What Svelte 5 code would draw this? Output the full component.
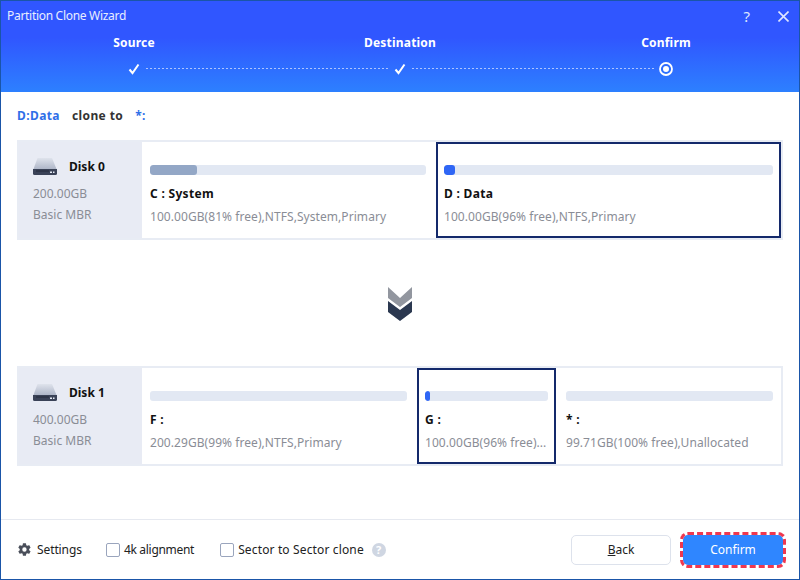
<script>
	const steps = [
		{ name: 'Source', state: 'done' },
		{ name: 'Destination', state: 'done' },
		{ name: 'Confirm', state: 'current' }
	];

	const disks = [
		{
			name: 'Disk 0',
			size: '200.00GB',
			type: 'Basic MBR',
			parts: [
				{ label: 'C : System', info: '100.00GB(81% free),NTFS,System,Primary', width: 292, used: 17, fill: 'grey' },
				{ label: 'D : Data', info: '100.00GB(96% free),NTFS,Primary', width: 345, used: 3.300, fill: 'blue', selected: true }
			]
		},
		{
			name: 'Disk 1',
			size: '400.00GB',
			type: 'Basic MBR',
			parts: [
				{ label: 'F :', info: '200.29GB(99% free),NTFS,Primary', width: 273, used: 0 },
				{ label: 'G :', info: '100.00GB(96% free)...', width: 139, used: 4, fill: 'blue', selected: true },
				{ label: '* :', info: '99.71GB(100% free),Unallocated', width: 223, used: 0 }
			]
		}
	];
</script>

{#snippet diskRow(disk)}
	<div class="disk">
		<div class="disk-info">
			<div class="disk-title">
				<svg width="24" height="17" viewBox="0 0 24 17">
					<defs>
						<linearGradient id="hdd" x1="0" y1="0" x2="0" y2="1">
							<stop offset="0" stop-color="#dfe3ec" />
							<stop offset="1" stop-color="#aeb6c8" />
						</linearGradient>
					</defs>
					<path d="M4.500 0h14.500L23.500 11H.5z" fill="url(#hdd)" />
					<path d="M0 11h24v4.500a1.500 1.500 0 0 1-1.500 1.500H1.500A1.500 1.500 0 0 1 0 15.500z" fill="#3a4257" />
					<rect x="3" y="12.500" width="13" height="1" fill="#23293a" />
					<rect x="17" y="13.500" width="2" height="1.500" fill="#e8edf7" />
					<rect x="20" y="13.500" width="1.500" height="1.500" fill="#e8edf7" />
				</svg>
				<b>{disk.name}</b>
			</div>
			<div class="disk-meta">{disk.size}</div>
			<div class="disk-meta">{disk.type}</div>
		</div>
		{#each disk.parts as part}
			<div class="part" class:selected={part.selected} style="width: {part.width}px">
				<div class="bar">
					{#if part.used}
						<div class="bar-fill {part.fill}" style="width: {part.used}%"></div>
					{/if}
				</div>
				<div class="part-label">{part.label}</div>
				<div class="part-info">{part.info}</div>
			</div>
		{/each}
	</div>
{/snippet}

<div class="window">
	<header class="head">
		<div class="title-row">
			<span class="title">Partition Clone Wizard</span>
			<div class="win-btns">
				<span class="help">?</span>
				<svg width="11" height="11" viewBox="0 0 11 11">
					<path d="M.5 .5l10 10M10.500 .5l-10 10" stroke="#dfe6ff" stroke-width="1.600" fill="none" />
				</svg>
			</div>
		</div>
		<div class="steps">
			{#each steps as step, i}
				<div class="step">
					<div class="step-name">{step.name}</div>
					<div class="step-mark">
						{#if step.state === 'done'}
							<svg width="12" height="12" viewBox="0 0 12 12">
								<path d="M1.500 6.500L4.500 10L10.500 1.500" stroke="#fff" stroke-width="2" fill="none" />
							</svg>
						{:else}
							<svg width="16" height="16" viewBox="0 0 16 16">
								<circle cx="8" cy="8" r="6" stroke="#fff" stroke-width="1.800" fill="none" />
								<circle cx="8" cy="8" r="3" fill="#fff" />
							</svg>
						{/if}
					</div>
				</div>
				{#if i < steps.length - 1}
					<div class="dots"></div>
				{/if}
			{/each}
		</div>
	</header>

	<div class="content">
		<div class="summary">
			<span class="blue-text">D:Data</span>
			<span>clone to</span>
			<span class="blue-text">*:</span>
		</div>

		{@render diskRow(disks[0])}

		<div class="arrow">
			<svg width="24" height="34" viewBox="0 0 24 34">
				<path d="M0 0L12 11L24 0V11L12 20L0 11z" fill="#92969f" />
				<path d="M0 14L12 23L24 14V25L12 34L0 25z" fill="#2b3850" />
			</svg>
		</div>

		{@render diskRow(disks[1])}
	</div>

	<footer class="foot">
		<div class="opt settings">
			<svg width="15" height="15" viewBox="0 0 24 24">
				<path fill="#4a4f5a" d="M19.400 13c.04-.33.06-.66.06-1s-.02-.67-.06-1l2.100-1.650a.5.5 0 0 0 .12-.64l-2-3.460a.5.5 0 0 0-.61-.22l-2.490 1a7.300 7.300 0 0 0-1.730-1l-.38-2.650A.5.5 0 0 0 13.900 2h-4a.5.500 0 0 0-.49.42l-.38 2.650c-.62.25-1.200.59-1.730 1l-2.490-1a.5.5 0 0 0-.61.22l-2 3.460a.5.5 0 0 0 .12.64L4.420 11c-.04.33-.06.67-.06 1s.02.67.06 1l-2.100 1.650a.5.5 0 0 0-.12.64l2 3.460c.12.22.39.3.61.22l2.490-1c.53.41 1.110.75 1.730 1l.38 2.650c.04.24.25.42.49.42h4c.24 0 .45-.18.49-.42l.38-2.650c.62-.25 1.200-.59 1.730-1l2.490 1c.22.08.49 0 .61-.22l2-3.460a.5.5 0 0 0-.12-.64zM11.900 15.500a3.500 3.500 0 1 1 0-7 3.500 3.500 0 0 1 0 7z" />
			</svg>
			<span>Settings</span>
		</div>
		<div class="opt align"><span class="check"></span><span>4k alignment</span></div>
		<div class="opt sector"><span class="check"></span><span>Sector to Sector clone</span><span class="tip">?</span></div>
		<div class="buttons">
			<button class="btn back"><u>B</u>ack</button>
			<button class="btn confirm">Confirm</button>
		</div>
	</footer>
</div>

<style>
	:global(body) {
		margin: 0;
	}

	.window {
		width: 800px;
		height: 580px;
		box-sizing: border-box;
		border: 1px solid #1a55a8;
		display: flex;
		flex-direction: column;
		background: #fff;
		font-family: "Noto Sans", sans-serif;
		font-size: 12px;
		color: #222;
		overflow: hidden;
	}

	.head {
		height: 91px;
		flex: none;
		background: linear-gradient(180deg, #3056ff 0%, #3056ff 40%, #2d80ff 100%);
		color: #fff;
	}

	.title-row {
		height: 30px;
		display: flex;
		align-items: center;
		justify-content: space-between;
		padding: 0 10px 0 6px;
	}

	.title {
		color: #e8edff;
		letter-spacing: -0.3px;
		margin-top: -1px;
	}

	.win-btns {
		display: flex;
		align-items: center;
		gap: 28px;
	}

	.help {
		font-size: 15px;
		color: #dfe6ff;
	}

	.steps {
		display: flex;
		padding: 4px 0 0 133px;
	}

	.step {
		width: 0;
		display: flex;
		flex-direction: column;
		align-items: center;
	}

	.step-name {
		font-weight: bold;
		white-space: nowrap;
		height: 24px;
		line-height: 16px;
		letter-spacing: 0.2px;
	}

	.step-mark {
		height: 20px;
		display: flex;
		align-items: center;
	}

	.dots {
		width: 242px;
		height: 1px;
		margin: 33px 12px 0;
		background: repeating-linear-gradient(90deg, #aec3ff 0 2px, transparent 2px 4px);
	}

	.content {
		flex: 1;
		padding: 0 16px;
	}

	.summary {
		height: 48px;
		box-sizing: border-box;
		padding-bottom: 2px;
		display: flex;
		align-items: center;
		gap: 12px;
		font-weight: bold;
		color: #333;
		letter-spacing: 0.4px;
	}

	.blue-text {
		color: #2f6fe8;
	}

	.disk {
		display: flex;
		height: 100px;
		box-sizing: border-box;
		border: 2px solid #e8ecf4;
	}

	.disk-info {
		width: 123px;
		flex: none;
		box-sizing: border-box;
		background: #e8ebf4;
		padding: 16px 0 0 14px;
		color: #8a8d96;
	}

	.disk-title {
		display: flex;
		align-items: center;
		gap: 12px;
		color: #111;
		margin-bottom: 8px;
	}

	.disk-meta {
		height: 21px;
		line-height: 21px;
	}

	.part {
		box-sizing: border-box;
		flex: none;
		padding: 21px 6px 0;
		border: 2px solid transparent;
		background: #fff;
	}

	.part.selected {
		border-color: #14296b;
		margin-left: 2px;
	}

	.part.selected + .part {
		margin-left: 2px;
	}

	.bar {
		height: 10px;
		background: #e2e8f3;
		border-radius: 3px;
		overflow: hidden;
	}

	.bar-fill {
		height: 100%;
		border-radius: 3px;
	}

	.bar-fill.grey {
		background: #93a7c6;
	}

	.bar-fill.blue {
		background: #2f66f5;
	}

	.part-label {
		margin-top: 11px;
		font-weight: bold;
		color: #111;
		height: 16px;
		line-height: 16px;
		letter-spacing: 0.3px;
	}

	.part-info {
		margin-top: 6px;
		color: #8a8d96;
		white-space: nowrap;
		letter-spacing: 0.06px;
	}

	.arrow {
		height: 126px;
		box-sizing: border-box;
		padding-top: 2px;
		display: flex;
		align-items: center;
		justify-content: center;
	}

	.foot {
		height: 60px;
		flex: none;
		box-sizing: border-box;
		border-top: 1px solid #e6e9f0;
		display: flex;
		align-items: center;
		padding: 0 16px;
		gap: 24px;
	}

	.opt {
		display: flex;
		align-items: center;
		gap: 4px;
	}

	.settings {
		gap: 5px;
	}

	.settings span {
		letter-spacing: -0.1px;
	}

	.align span {
		letter-spacing: -0.3px;
	}

	.sector {
		margin-left: 2px;
		letter-spacing: 0.14px;
	}

	.check {
		width: 12px;
		height: 12px;
		border: 1px solid #9aa5bd;
		border-radius: 2px;
	}

	.tip {
		width: 14px;
		height: 14px;
		margin-left: 4px;
		border-radius: 50%;
		background: #cfd6e2;
		color: #fff;
		font-weight: bold;
		font-size: 11px;
		text-align: center;
		line-height: 14px;
	}

	.buttons {
		margin-left: auto;
		display: flex;
		gap: 12px;
	}

	.btn {
		font: inherit;
		width: 100px;
		height: 30px;
		border-radius: 5px;
		padding: 0;
	}

	.back {
		background: #fff;
		border: 1px solid #dde2ec;
		color: #222;
	}

	.confirm {
		background: #2f86ff;
		border: none;
		color: #fff;
		outline: 3px dashed #f0384f;
		outline-offset: 0;
	}
</style>
